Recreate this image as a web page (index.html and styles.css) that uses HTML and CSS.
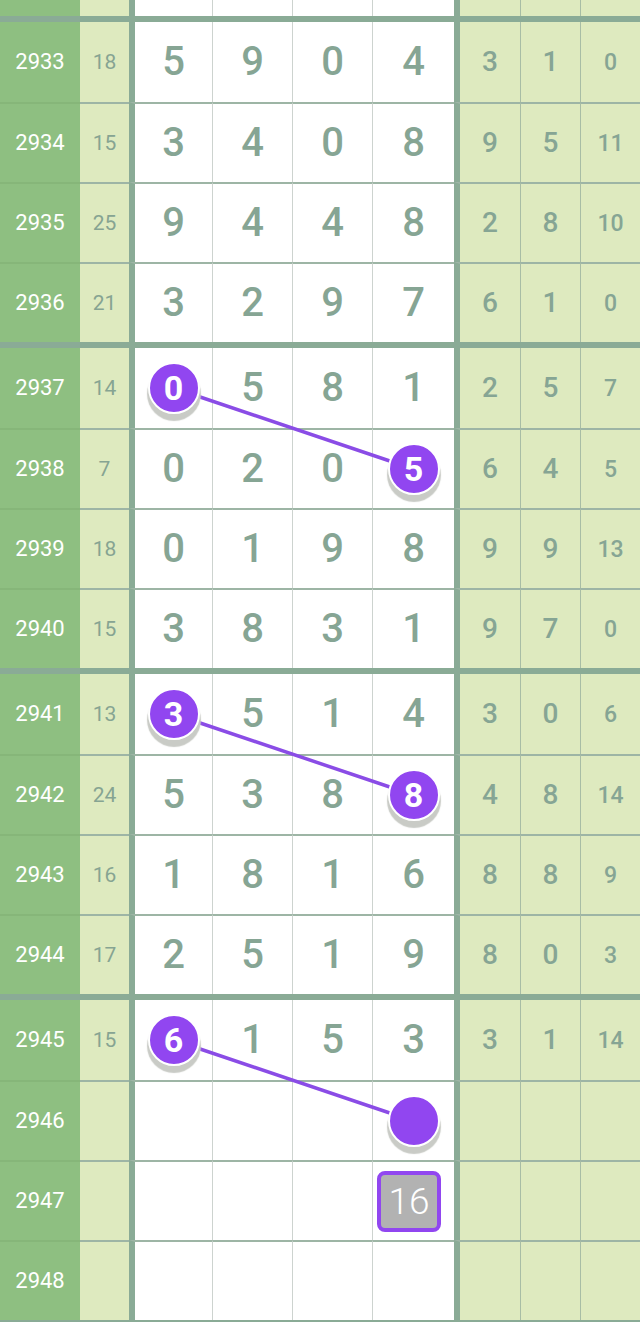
FILE: index.html
```html
<!DOCTYPE html>
<html lang="zh">
<head>
<meta charset="utf-8">
<title>走势图</title>
<link rel="stylesheet" href="styles.css">
</head>
<body>
<div class="chart">
  <div class="row partial">
    <div class="c issue"></div><div class="c sum"></div>
    <div class="c d first"></div><div class="c d"></div><div class="c d"></div><div class="c d"></div>
    <div class="c r first"></div><div class="c r"></div><div class="c r last"></div>
  </div>

  <div class="group">
    <div class="row">
      <div class="c issue">2933</div><div class="c sum">18</div>
      <div class="c d first">5</div><div class="c d">9</div><div class="c d">0</div><div class="c d">4</div>
      <div class="c r first">3</div><div class="c r">1</div><div class="c r last">0</div>
    </div>
    <div class="row">
      <div class="c issue">2934</div><div class="c sum">15</div>
      <div class="c d first">3</div><div class="c d">4</div><div class="c d">0</div><div class="c d">8</div>
      <div class="c r first">9</div><div class="c r">5</div><div class="c r last">11</div>
    </div>
    <div class="row">
      <div class="c issue">2935</div><div class="c sum">25</div>
      <div class="c d first">9</div><div class="c d">4</div><div class="c d">4</div><div class="c d">8</div>
      <div class="c r first">2</div><div class="c r">8</div><div class="c r last">10</div>
    </div>
    <div class="row">
      <div class="c issue">2936</div><div class="c sum">21</div>
      <div class="c d first">3</div><div class="c d">2</div><div class="c d">9</div><div class="c d">7</div>
      <div class="c r first">6</div><div class="c r">1</div><div class="c r last">0</div>
    </div>
  </div>

  <div class="group">
    <div class="row">
      <div class="c issue">2937</div><div class="c sum">14</div>
      <div class="c d first"><span class="ball">0</span></div><div class="c d">5</div><div class="c d">8</div><div class="c d">1</div>
      <div class="c r first">2</div><div class="c r">5</div><div class="c r last">7</div>
    </div>
    <div class="row">
      <div class="c issue">2938</div><div class="c sum">7</div>
      <div class="c d first">0</div><div class="c d">2</div><div class="c d">0</div><div class="c d"><span class="ball">5</span></div>
      <div class="c r first">6</div><div class="c r">4</div><div class="c r last">5</div>
    </div>
    <div class="row">
      <div class="c issue">2939</div><div class="c sum">18</div>
      <div class="c d first">0</div><div class="c d">1</div><div class="c d">9</div><div class="c d">8</div>
      <div class="c r first">9</div><div class="c r">9</div><div class="c r last">13</div>
    </div>
    <div class="row">
      <div class="c issue">2940</div><div class="c sum">15</div>
      <div class="c d first">3</div><div class="c d">8</div><div class="c d">3</div><div class="c d">1</div>
      <div class="c r first">9</div><div class="c r">7</div><div class="c r last">0</div>
    </div>
  </div>

  <div class="group">
    <div class="row">
      <div class="c issue">2941</div><div class="c sum">13</div>
      <div class="c d first"><span class="ball">3</span></div><div class="c d">5</div><div class="c d">1</div><div class="c d">4</div>
      <div class="c r first">3</div><div class="c r">0</div><div class="c r last">6</div>
    </div>
    <div class="row">
      <div class="c issue">2942</div><div class="c sum">24</div>
      <div class="c d first">5</div><div class="c d">3</div><div class="c d">8</div><div class="c d"><span class="ball">8</span></div>
      <div class="c r first">4</div><div class="c r">8</div><div class="c r last">14</div>
    </div>
    <div class="row">
      <div class="c issue">2943</div><div class="c sum">16</div>
      <div class="c d first">1</div><div class="c d">8</div><div class="c d">1</div><div class="c d">6</div>
      <div class="c r first">8</div><div class="c r">8</div><div class="c r last">9</div>
    </div>
    <div class="row">
      <div class="c issue">2944</div><div class="c sum">17</div>
      <div class="c d first">2</div><div class="c d">5</div><div class="c d">1</div><div class="c d">9</div>
      <div class="c r first">8</div><div class="c r">0</div><div class="c r last">3</div>
    </div>
  </div>

  <div class="group">
    <div class="row">
      <div class="c issue">2945</div><div class="c sum">15</div>
      <div class="c d first"><span class="ball">6</span></div><div class="c d">1</div><div class="c d">5</div><div class="c d">3</div>
      <div class="c r first">3</div><div class="c r">1</div><div class="c r last">14</div>
    </div>
    <div class="row">
      <div class="c issue">2946</div><div class="c sum"></div>
      <div class="c d first"></div><div class="c d"></div><div class="c d"></div><div class="c d"><span class="ball"></span></div>
      <div class="c r first"></div><div class="c r"></div><div class="c r last"></div>
    </div>
    <div class="row">
      <div class="c issue">2947</div><div class="c sum"></div>
      <div class="c d first"></div><div class="c d"></div><div class="c d"></div><div class="c d"><span class="tag">16</span></div>
      <div class="c r first"></div><div class="c r"></div><div class="c r last"></div>
    </div>
    <div class="row">
      <div class="c issue">2948</div><div class="c sum"></div>
      <div class="c d first"></div><div class="c d"></div><div class="c d"></div><div class="c d"></div>
      <div class="c r first"></div><div class="c r"></div><div class="c r last"></div>
    </div>
  </div>

  <div class="group end"></div>

  <svg class="links" width="640" height="1322" viewBox="0 0 640 1322">
    <line x1="173.5" y1="388" x2="413.5" y2="469" />
    <line x1="173.5" y1="714" x2="413.5" y2="795" />
    <line x1="173.5" y1="1040" x2="413.5" y2="1121" />
  </svg>
</div>
</body>
</html>
```

FILE: styles.css
```css
html, body {
  margin: 0;
  padding: 0;
  background: #ffffff;
}

body {
  font-family: Roboto, "Liberation Sans", sans-serif;
  overflow: hidden;
}

.chart {
  position: relative;
  width: 640px;
}

.row {
  display: grid;
  grid-template-columns: 80px 49px 83px 80px 80px 82px 66px 60px 60px;
  height: 80px;
}

.row.partial {
  height: 16px;
}

.group {
  border-top: 6px solid #8aab96;
}

.group.end {
  height: 10px;
}

.c {
  display: flex;
  align-items: center;
  justify-content: center;
  box-sizing: border-box;
  line-height: 1;
}

.issue {
  background: #8ebf81;
  color: #ffffff;
  font-size: 22px;
  font-weight: 400;
}

.sum {
  background: #deeabf;
  color: #86a492;
  font-size: 21px;
}

.d {
  background: #ffffff;
  color: #86a594;
  font-size: 40px;
  font-weight: 500;
  border-left: 1px solid #cdd3cf;
}

.d.first {
  border-left: 6px solid #8aab96;
}

.r {
  background: #deeabf;
  color: #86a594;
  font-size: 28px;
  font-weight: 500;
  border-left: 1px solid #a8bda5;
}

.r.first {
  border-left: 6px solid #8aab96;
}

.r.last {
  font-size: 23px;
}

.group .row + .row .c {
  border-top: 2px solid #9db5a5;
}

.group .row + .row .issue {
  border-top-color: #86b679;
}

.ball {
  position: relative;
  z-index: 2;
  width: 48px;
  height: 48px;
  border-radius: 50%;
  background: #9146f0;
  border: 2px solid #ffffff;
  box-shadow: 0 6px 1px 1px #c9cbc6;
  color: #ffffff;
  font-size: 34px;
  font-weight: 700;
  display: flex;
  align-items: center;
  justify-content: center;
  line-height: 1;
}

.tag {
  position: relative;
  z-index: 2;
  width: 56px;
  height: 53px;
  box-sizing: content-box;
  background: #b2b2b2;
  border: 4px solid #9146f0;
  border-radius: 8px;
  color: #ffffff;
  font-size: 37px;
  font-weight: 300;
  display: flex;
  align-items: center;
  justify-content: center;
  margin-right: 9px;
  line-height: 1;
}

.links {
  position: absolute;
  top: 0;
  left: 0;
  z-index: 1;
  pointer-events: none;
}

.links line {
  stroke: #8a4ce6;
  stroke-width: 3.5;
  stroke-linecap: round;
}
```
